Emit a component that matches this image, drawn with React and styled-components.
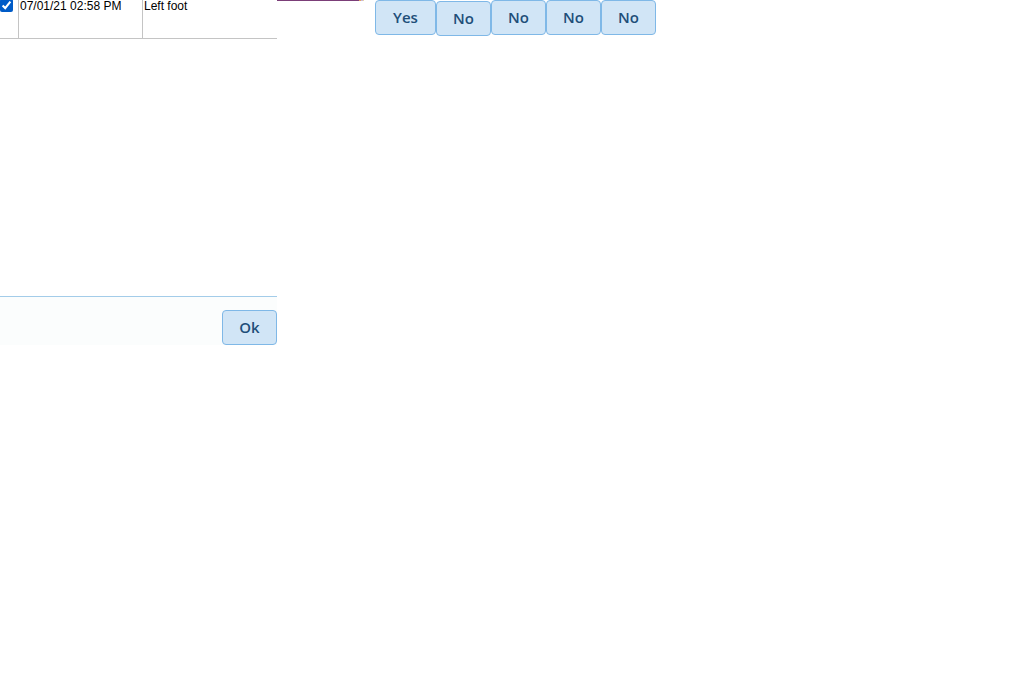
import React from "react";
import styled, { createGlobalStyle } from "styled-components";

const GlobalStyle = createGlobalStyle`
  * { margin: 0; padding: 0; box-sizing: border-box; }
  body { background: #fff; font-family: "Liberation Sans", Arial, sans-serif; }
`;

const Page = styled.div`
  display: flex;
  align-items: flex-start;
  width: 1034px;
  height: 682px;
  overflow: hidden;
`;

const Dialog = styled.div`
  width: 277px;
  display: flex;
  flex-direction: column;
`;

const Row = styled.div`
  display: flex;
  height: 40px;
  margin-top: -1px;
  border-bottom: 1px solid #c4c4c4;
`;

const Cell = styled.div`
  width: ${(p) => p.w}px;
  flex: ${(p) => (p.grow ? 1 : "none")};
  border-left: ${(p) => (p.first ? "none" : "1px solid #c4c4c4")};
  padding-left: ${(p) => (p.first ? 0 : 1)}px;
  padding-top: ${(p) => (p.first ? 0 : 1)}px;
  font-size: 12px;
  line-height: 13px;
  color: #000;
`;

const Check = styled.input`
  width: 13px;
  height: 13px;
  margin: 0;
  accent-color: #0075ff;
  display: block;
`;

const Body = styled.div`
  height: 258px;
  border-bottom: 1px solid #a3cce9;
`;

const Footer = styled.div`
  height: 48px;
  background: #fbfdfd;
  display: flex;
  justify-content: flex-end;
  align-items: flex-start;
  padding-top: 13px;
`;

const Btn = styled.button`
  width: ${(p) => p.w}px;
  height: 35px;
  margin-top: ${(p) => p.top || 0}px;
  background: #d1e5f6;
  border: 1px solid #7fb8e7;
  border-radius: 4px;
  color: #1e4e79;
  font-family: "Open Sans", "DejaVu Sans", sans-serif;
  font-weight: 600;
  font-size: 15px;
  padding-bottom: 1px;
  cursor: pointer;
`;

const Middle = styled.div`
  width: 98px;
  display: flex;
  align-items: flex-start;
`;

const Rule = styled.div`
  width: 82px;
  height: 2px;
  background: #7b3e78;
  margin-top: -1px;
`;

const Dots = styled.div`
  width: 5px;
  height: 2px;
  margin-top: -1px;
  background: linear-gradient(90deg, #e0a060 0 2px, #c9b5d8 2px 4px, #e8d8a0 4px);
`;

const Buttons = styled.div`
  display: flex;
  align-items: flex-start;
`;

export default function App() {
  return (
    <Page>
      <GlobalStyle />
      <Dialog>
        <Row>
          <Cell w={18} first>
            <Check type="checkbox" defaultChecked />
          </Cell>
          <Cell w={124}>07/01/21 02:58 PM</Cell>
          <Cell grow>Left foot</Cell>
        </Row>
        <Body />
        <Footer>
          <Btn w={55}>Ok</Btn>
        </Footer>
      </Dialog>
      <Middle>
        <Rule />
        <Dots />
      </Middle>
      <Buttons>
        <Btn w={61}>Yes</Btn>
        <Btn w={55} top={1}>No</Btn>
        <Btn w={55}>No</Btn>
        <Btn w={55}>No</Btn>
        <Btn w={55}>No</Btn>
      </Buttons>
    </Page>
  );
}
